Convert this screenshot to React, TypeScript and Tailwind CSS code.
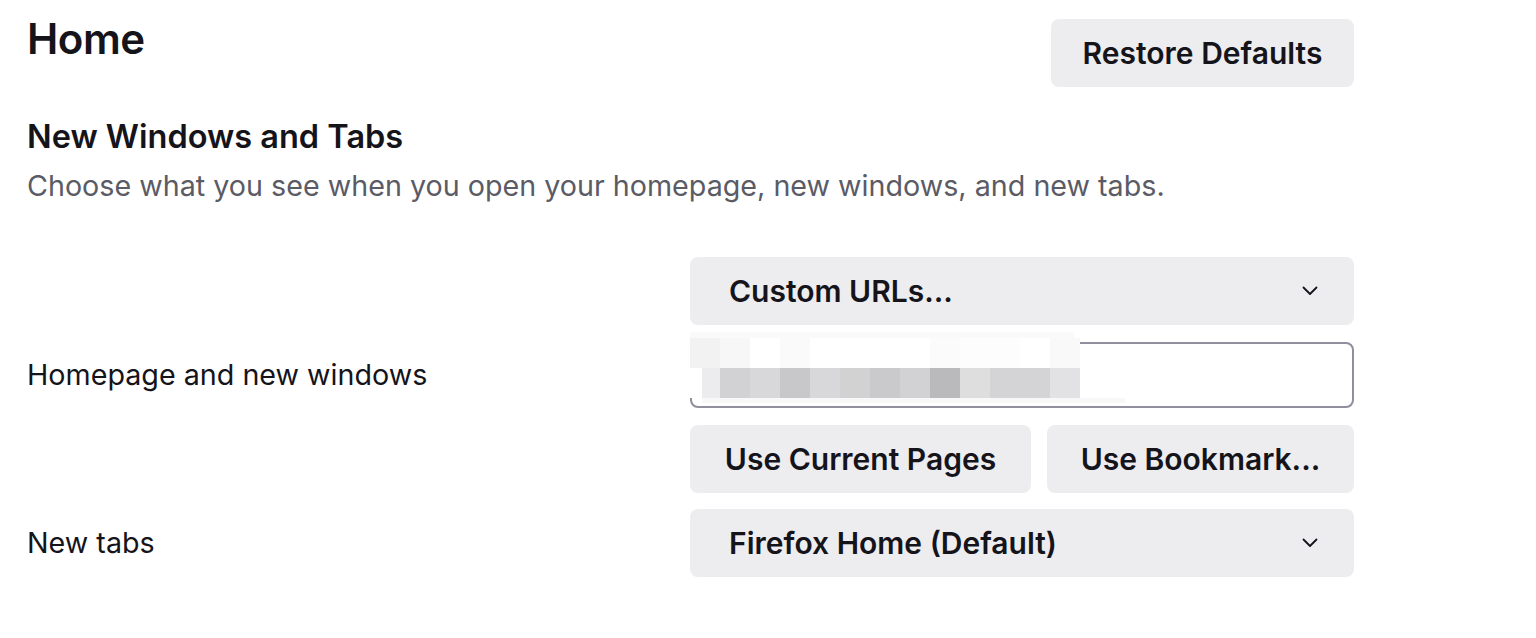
import React from "react";

const grayRow = [
  { w: 12, c: "#ffffff" },
  { w: 18, c: "#ececee" },
  { w: 30, c: "#d2d2d4" },
  { w: 30, c: "#d8d8da" },
  { w: 30, c: "#c8c8ca" },
  { w: 30, c: "#d8d8da" },
  { w: 30, c: "#d2d2d2" },
  { w: 30, c: "#cacacc" },
  { w: 30, c: "#d2d2d4" },
  { w: 30, c: "#bababc" },
  { w: 30, c: "#dedede" },
  { w: 30, c: "#d4d4d6" },
  { w: 30, c: "#d4d4d6" },
  { w: 30, c: "#e2e2e4" },
];

const lightRow = [
  { w: 30, c: "#f2f2f3" },
  { w: 30, c: "#f7f7f8" },
  { w: 30, c: "#ffffff" },
  { w: 30, c: "#fafafa" },
  { w: 120, c: "#ffffff" },
  { w: 30, c: "#fbfbfb" },
  { w: 60, c: "#fdfdfd" },
  { w: 30, c: "#ffffff" },
  { w: 30, c: "#f9f9f9" },
];

function Chevron() {
  return (
    <svg width="16" height="10" viewBox="0 0 16 10" fill="none" className="shrink-0">
      <path d="M1.5 1.5 L8 8 L14.5 1.5" stroke="#15141a" strokeWidth="1.8" strokeLinecap="round" strokeLinejoin="round" />
    </svg>
  );
}

function Select({ label }: { label: string }) {
  return (
    <div className="h-[68px] w-full rounded-[8px] bg-[#ededf0] pl-[39px] pr-[36px] flex items-center justify-between">
      <span className="text-[30px] font-semibold text-[#15141a]">{label}</span>
      <Chevron />
    </div>
  );
}

function Button({ label, className = "" }: { label: string; className?: string }) {
  return (
    <button className={`h-[68px] rounded-[8px] bg-[#ededf0] text-[30px] font-semibold text-[#15141a] flex items-center justify-center ${className}`}>
      {label}
    </button>
  );
}

export default function App() {
  return (
    <main className="min-h-[638px] bg-white text-[#15141a] font-['Inter',sans-serif] pl-[27px] pt-[19px]">
      <div className="w-[1327px]">
        <div className="flex items-start justify-between">
          <h1 className="text-[42px] font-semibold leading-[40px] tracking-[-0.5px]">Home</h1>
          <Button label="Restore Defaults" className="w-[303px]" />
        </div>

        <h2 className="mt-[32px] text-[32.5px] font-semibold leading-[36px]">New Windows and Tabs</h2>
        <p className="mt-[14px] text-[28.7px] leading-[34px] text-[#5b5b66]">
          Choose what you see when you open your homepage, new windows, and new tabs.
        </p>

        <div className="mt-[54px] flex items-center">
          <div className="w-[663px] text-[28.7px]">Homepage and new windows</div>
          <div className="w-[664px] flex flex-col gap-[17px]">
            <Select label="Custom URLs..." />
            <div className="relative h-[66px] rounded-[8px] border-2 border-[#8f8f9d] bg-white">
              <div className="absolute left-[-2px] top-[-12px] flex flex-col">
                <div className="h-[6px] w-[384px] bg-[#fafafa]" />
                <div className="flex h-[30px]">
                  {lightRow.map((cell, i) => (
                    <div key={i} style={{ width: cell.w, background: cell.c }} />
                  ))}
                </div>
                <div className="flex h-[30px]">
                  {grayRow.map((cell, i) => (
                    <div key={i} style={{ width: cell.w, background: cell.c }} />
                  ))}
                </div>
                <div className="ml-[12px] h-[5px] w-[423px] bg-[#f8f8f8]" />
              </div>
            </div>
            <div className="flex gap-[16px]">
              <Button label="Use Current Pages" className="w-[341px]" />
              <Button label="Use Bookmark..." className="flex-1" />
            </div>
          </div>
        </div>

        <div className="mt-[16px] flex items-center">
          <div className="w-[663px] text-[28.7px]">New tabs</div>
          <div className="w-[664px]">
            <Select label="Firefox Home (Default)" />
          </div>
        </div>
      </div>
    </main>
  );
}
